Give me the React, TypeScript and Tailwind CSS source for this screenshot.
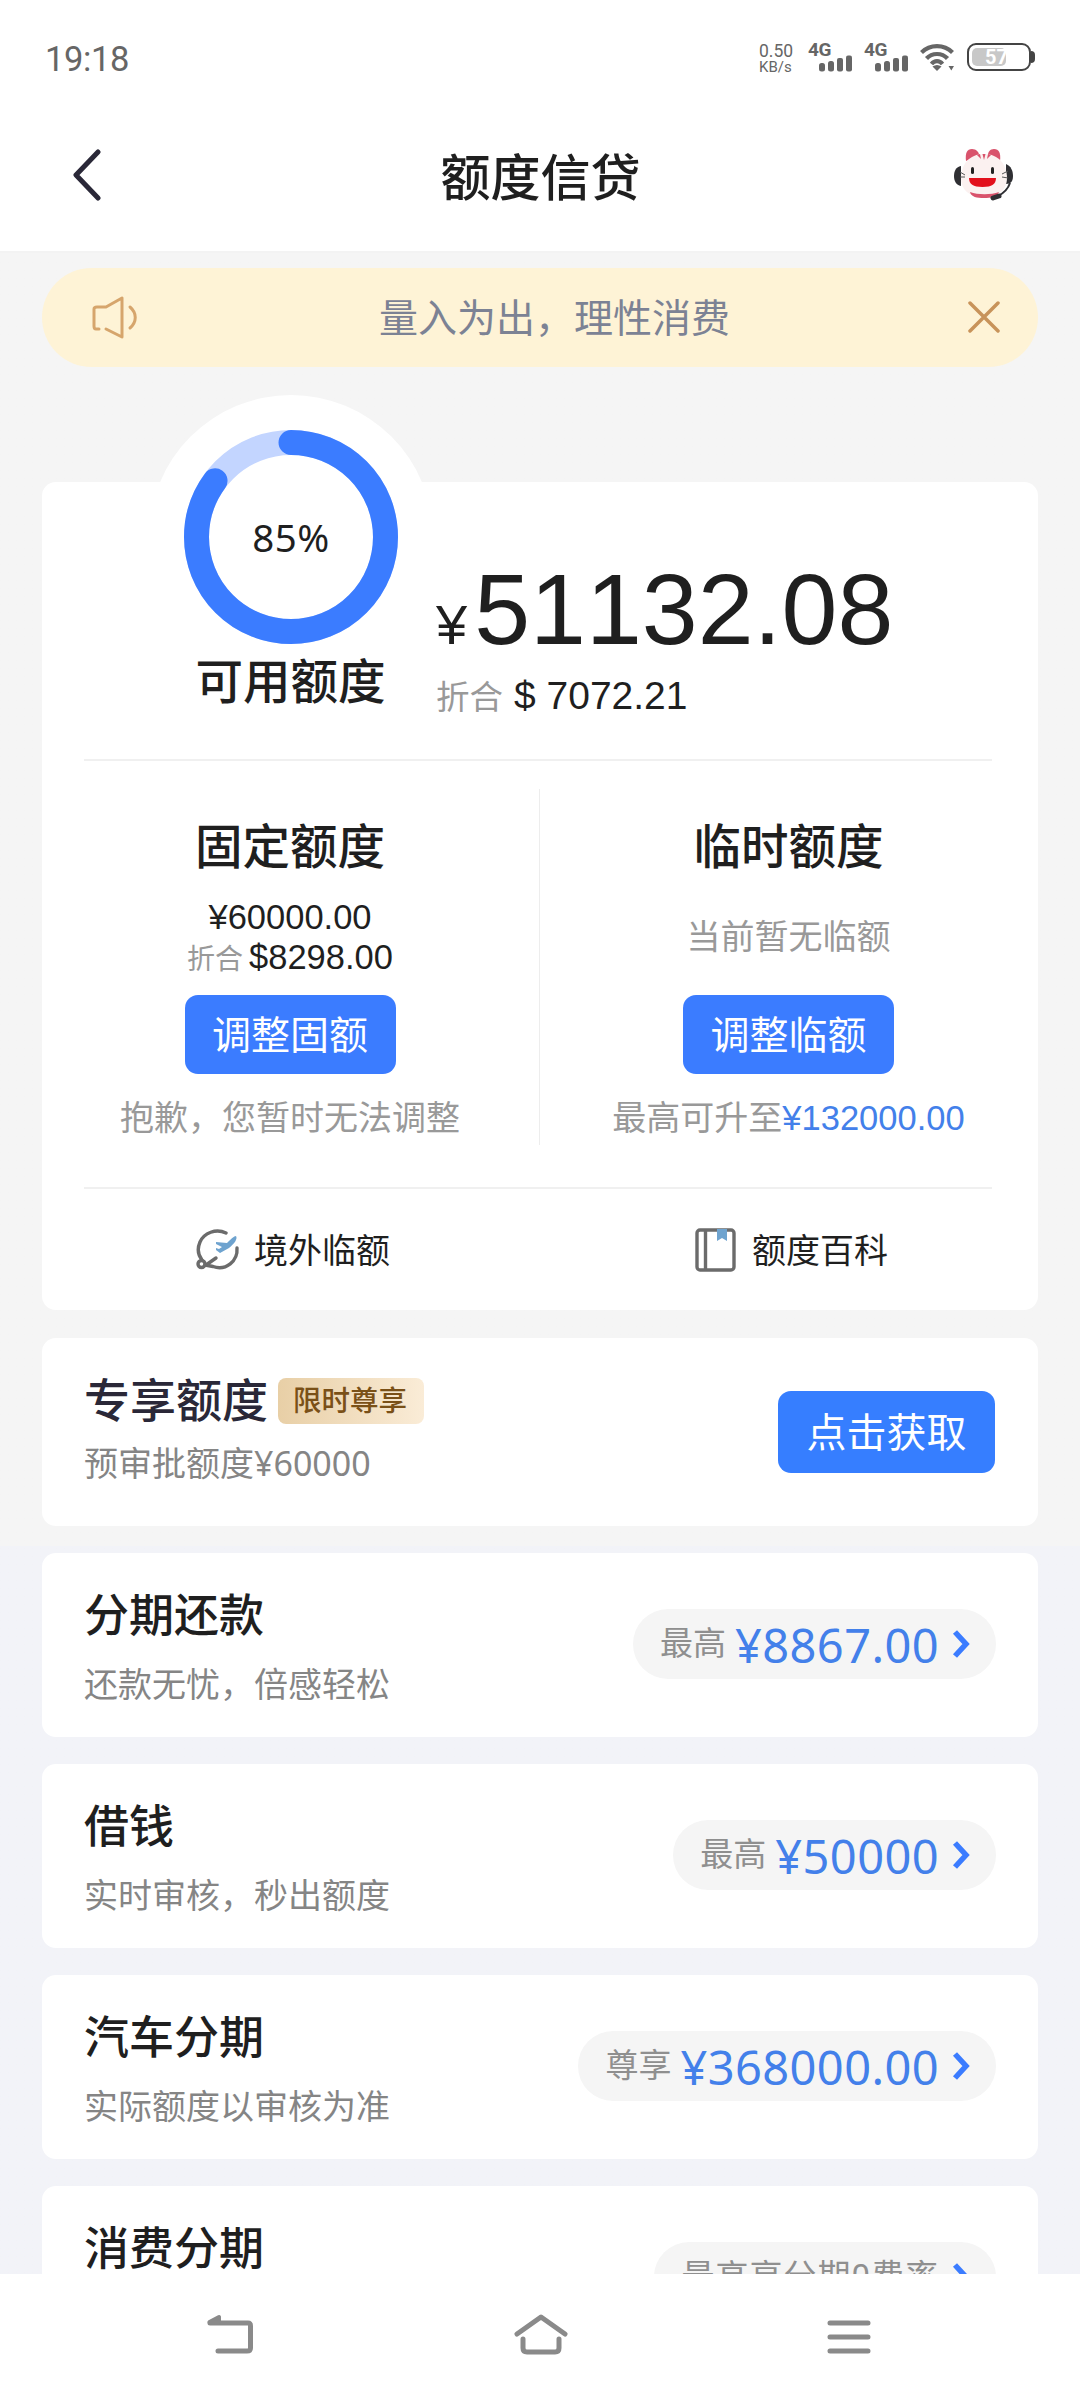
import type { ReactNode } from 'react';

// 分期产品列表
const products = [
  { title: '分期还款', desc: '还款无忧，倍感轻松', label: '最高', amount: '¥8867.00' },
  { title: '借钱', desc: '实时审核，秒出额度', label: '最高', amount: '¥50000' },
  { title: '汽车分期', desc: '实际额度以审核为准', label: '尊享', amount: '¥368000.00' },
  { title: '消费分期', desc: '', label: '最高享分期0费率', amount: '' },
];

function Signal() {
  return (
    <div className="relative w-[46px] h-[30px]">
      <span className="absolute left-0 top-0 text-[19px] leading-[16px] font-bold tracking-tight">4G</span>
      <svg className="absolute left-[11px] top-[13px]" width="34" height="17" viewBox="0 0 34 17" fill="#666">
        <rect x="0" y="8" width="6" height="8.5" rx="2.5" />
        <rect x="9" y="6" width="6" height="10.5" rx="2.5" />
        <rect x="18" y="3" width="6" height="13.5" rx="2" />
        <rect x="27" y="0.5" width="6" height="16" rx="2" />
      </svg>
    </div>
  );
}

function StatusBar() {
  return (
    <div className="h-[100px] pt-[42px] pl-[45px] pr-[45px] flex justify-between items-start text-[#666]">
      <div className="text-[34.5px] leading-[34px] tracking-[-0.4px]">19:18</div>
      <div className="flex items-start">
        <div className="w-[49px] text-[17.5px] leading-[18px]">
          <div>0.50</div>
          <div className="text-[15px] leading-[14px]">KB/s</div>
        </div>
        <div className="flex gap-[10px]">
          <Signal />
          <Signal />
        </div>
        <svg className="ml-[10px] mt-[1px]" width="36" height="30" viewBox="0 0 36 30" fill="none" stroke="#666" strokeWidth="4.2">
          <path d="M1.5 9.5C10 1 24 1 32.5 9.5" />
          <path d="M6.5 15.5C12 9.5 22 9.5 27.5 15.5" />
          <path d="M11.5 21C14.5 17.2 19.5 17.2 22.5 21" />
          <path d="M12.5 23.5C15.5 21.5 18.5 21.5 21.5 23.5L17 28Z" fill="#666" stroke="none" />
          <path d="M28.5 23h5.5l-2.7 4.5z" fill="#666" stroke="none" />
        </svg>
        <div className="ml-[11px] mt-[1px] flex items-center">
          <div className="relative w-[64px] h-[28px] border-2 border-[#444] rounded-[9px]">
            <div className="absolute left-[3px] top-[3px] w-[34px] h-[18px] rounded-[5px] bg-[#c8c8c8]" />
            <div className="absolute left-[16px] top-[2px] text-[20px] leading-[20px] font-bold text-white">57</div>
          </div>
          <div className="w-[4px] h-[12px] bg-[#444] rounded-r-full" />
        </div>
      </div>
    </div>
  );
}

function Mascot() {
  return (
    <svg width="62" height="58" viewBox="0 0 62 58">
      <path d="M13 14C12 6 14 2 19 2C23 2 26 5 26 8Z" fill="#d9536c" />
      <path d="M47 14C48 6 46 2 41 2C37 2 35 5 35 8Z" fill="#d9536c" />
      <path d="M8 19C3 20 1 24 1 29C1 34 3 38 8 39Z" fill="#2f2f33" />
      <path d="M53 17C58 19 60 24 60 29C60 34 58 37 53 37Z" fill="#2f2f33" />
      <path d="M31 7C46 7 54 18 54 31C54 43 45 50 31 50C16 50 8 43 8 31C8 18 16 7 31 7Z" fill="#fbf1f0" />
      <path d="M17 45C25 48 38 48 46 45C44 50 38 51 31 51C24 51 18 50 17 45Z" fill="#d9536c" />
      <path d="M29.5 7h3l-1.5 6zM24 8l3-1 1 5zM38 8l-3-1-1 5z" fill="#d9536c" />
      <rect x="18" y="20" width="3" height="7" rx="1.5" fill="#222" />
      <rect x="38" y="20" width="3" height="7" rx="1.5" fill="#222" />
      <path d="M16 31H43C43 37 39 40 29.5 40C20 40 16 37 16 31Z" fill="#e2101c" />
      <path d="M7 25l5 3M7 30h5M55 24l-6 3M55 31l-6-1" stroke="#555" strokeWidth="1" />
      <path d="M57 36C55 42 51 46 45 49" stroke="#2f2f33" strokeWidth="2" fill="none" />
      <path d="M46 49L40 51" stroke="#2f2f33" strokeWidth="5" strokeLinecap="round" />
    </svg>
  );
}

function Header() {
  return (
    <div className="h-[153px] pl-[70px] pr-[65px] flex items-center justify-between border-b-2 border-[#f3f3f3]">
      <svg width="34" height="54" viewBox="0 0 34 54" fill="none" stroke="#2a2838" strokeWidth="5" strokeLinecap="round" strokeLinejoin="round">
        <path d="M28 3L6 26L28 49" />
      </svg>
      <h1 className="pt-[6px] pl-[24px] text-[50px] leading-[60px] font-medium text-[#1f1f1f]">额度信贷</h1>
      <Mascot />
    </div>
  );
}

function Notice() {
  return (
    <div className="mt-[15px] h-[99px] pl-[50px] pr-[36px] rounded-full bg-[#fef3d6] flex items-center justify-between">
      <svg width="48" height="46" viewBox="0 0 48 46" fill="none" stroke="#d6a56c" strokeWidth="3" strokeLinecap="round" strokeLinejoin="round">
        <path d="M7 34H4Q2 34 2 31V14Q2 12 5 12H14L30 3V42L14 34" />
        <path d="M38 12C45 18 45 27 38 33" />
      </svg>
      <span className="pt-[3px] pl-[3px] text-[39px] leading-[48px] text-[#7c8294]">量入为出，理性消费</span>
      <svg width="36" height="34" viewBox="0 0 36 34" stroke="#c8935a" strokeWidth="3.5" strokeLinecap="round">
        <path d="M4 2L32 30M32 2L4 30" />
      </svg>
    </div>
  );
}

function ProgressRing({ percent }: { percent: number }) {
  const length = 2 * Math.PI * 94.5;
  return (
    <div className="absolute left-[107px] top-[-87px] w-[284px] h-[284px] rounded-full bg-white flex items-center justify-center">
      <svg className="absolute left-0 top-0" width="284" height="284" viewBox="0 0 284 284" fill="none" strokeWidth="25">
        <circle cx="142" cy="142" r="94.5" stroke="#c3d5ff" />
        <circle
          cx="142"
          cy="142"
          r="94.5"
          stroke="#3b7cff"
          strokeLinecap="round"
          strokeDasharray={`${(length * percent) / 100} ${length}`}
          transform="rotate(-90 142 142)"
        />
      </svg>
      <span className="relative text-[38.5px] leading-[40px] tracking-[0.5px] font-['Noto_Sans',sans-serif] text-[#1f1f1f]">{percent}%</span>
    </div>
  );
}

function BlueButton({ children }: { children: ReactNode }) {
  return (
    <button className="w-[211px] h-[79px] pt-[2px] rounded-[13px] bg-[#3b7cff] text-[39px] leading-[48px] text-white">
      {children}
    </button>
  );
}

function QuotaCard() {
  return (
    <div className="relative mt-[115px] h-[828px] px-[42px] rounded-[14px] bg-white text-[#1f1f1f]">
      <ProgressRing percent={85} />

      {/* 可用额度 */}
      <div className="relative h-[279px] mr-[4px] border-b-2 border-[#f0f0f0] flex">
        <div className="w-[352px] pl-[61px] pt-[172px] flex justify-center">
          <span className="text-[47.5px] leading-[58px] font-medium">可用额度</span>
        </div>
        <div className="pt-[77px]">
          <div className="flex items-baseline font-['Liberation_Sans',sans-serif] leading-[100px] [font-kerning:none]">
            <span className="text-[56px]">¥</span>
            <span className="ml-[7px] text-[100.5px]">51132.08</span>
          </div>
          <div className="mt-[-4px] flex items-baseline leading-[50px]">
            <span className="text-[33.5px] text-[#999]">折合</span>
            <span className="ml-[11px] text-[39px] font-['Liberation_Sans',sans-serif]">$ 7072.21</span>
          </div>
        </div>
      </div>

      <div className="h-[428px] mr-[4px] py-[28px] border-b-2 border-[#f0f0f0] flex">
        {/* 固定额度 */}
        <div className="w-[455px] pr-[43px] pt-[30px] flex flex-col items-center">
          <h2 className="text-[47.5px] leading-[58px] font-medium">固定额度</h2>
          <div className="mt-[20px] text-[34.5px] leading-[40px] font-['Liberation_Sans',sans-serif]">¥60000.00</div>
          <div className="flex items-baseline leading-[40px]">
            <span className="text-[28px] text-[#999]">折合</span>
            <span className="ml-[6px] text-[34.5px] font-['Liberation_Sans',sans-serif]">$8298.00</span>
          </div>
          <div className="mt-[15px]"><BlueButton>调整固额</BlueButton></div>
          <p className="mt-[20px] text-[34px] leading-[48px] text-[#999] whitespace-nowrap">抱歉，您暂时无法调整</p>
        </div>
        <div className="w-px h-[356px] bg-[#ededed] shrink-0" />
        {/* 临时额度 */}
        <div className="flex-1 pl-[45px] pt-[30px] flex flex-col items-center">
          <h2 className="text-[47.5px] leading-[58px] font-medium">临时额度</h2>
          <p className="mt-[36px] text-[34px] leading-[48px] text-[#999]">当前暂无临额</p>
          <div className="mt-[34px]"><BlueButton>调整临额</BlueButton></div>
          <p className="mt-[20px] text-[34px] leading-[48px] text-[#999] whitespace-nowrap">
            最高可升至<span className="text-[34.5px] text-[#4380ea] font-['Liberation_Sans',sans-serif]">¥132000.00</span>
          </p>
        </div>
      </div>

      <div className="h-[121px] flex items-center text-[34px] leading-[48px]">
        <div className="w-[499px] pl-[112px] flex items-center">
          <svg width="44" height="44" viewBox="0 0 44 44" fill="none" stroke="#6b6b6b" strokeWidth="3.4" strokeLinecap="round">
            <path d="M30 5C20 0 8 5 4 14C1 21 2 27 6 32" />
            <path d="M41 20C42 33 30 43 17 38.5L9 37" />
            <path d="M20 30L10 37" />
            <circle cx="5.5" cy="36" r="3.5" />
            <path d="M40 8C38 8 35 11 31 15L20 14V16L26 19L23 21L20 20V22L24 25L33 20C38 16 42 11 40 8Z" fill="#6ea3cf" stroke="none" />
          </svg>
          <span className="ml-[14px] pt-[2px]">境外临额</span>
        </div>
        <div className="pl-[112px] flex items-center">
          <svg width="42" height="44" viewBox="0 0 42 44" fill="none" stroke="#6b6b6b" strokeWidth="3.4">
            <rect x="2" y="2" width="37" height="40" rx="3" />
            <path d="M10.5 2V42" />
            <path d="M22 1H32V13L27 10L22 13Z" fill="#6ea3cf" stroke="none" />
          </svg>
          <span className="ml-[15px] pt-[2px]">额度百科</span>
        </div>
      </div>
    </div>
  );
}

function ExclusiveCard() {
  return (
    <div className="mt-[28px] h-[188px] pl-[42px] pr-[43px] rounded-[14px] bg-white flex items-center justify-between">
      <div className="pb-[6px]">
        <div className="flex items-center">
          <h2 className="text-[46px] leading-[58px] font-medium text-[#2a2838]">专享额度</h2>
          <span className="ml-[10px] w-[146px] h-[46px] pr-[2px] rounded-[8px] bg-linear-to-r from-[#e8cfa6] to-[#faecd7] text-center text-[28.5px] leading-[47px] font-medium text-[#7a5017]">
            限时尊享
          </span>
        </div>
        <p className="mt-[9px] text-[34px] leading-[48px] font-['Noto_Sans','Noto_Sans_CJK_SC',sans-serif] text-[#858585]">预审批额度¥60000</p>
      </div>
      <button className="w-[217px] h-[82px] pt-[3px] rounded-[13px] bg-[#367eff] text-[40px] leading-[48px] text-white">点击获取</button>
    </div>
  );
}

function ProductCard({ title, desc, label, amount }: (typeof products)[number]) {
  return (
    <div className="h-[184px] shrink-0 pl-[42px] pr-[42px] rounded-[14px] bg-white flex justify-between">
      <div className="pt-[35px]">
        <h3 className="text-[45px] leading-[58px] font-medium text-[#1f1f1f]">{title}</h3>
        <p className="mt-[15px] text-[34px] leading-[48px] text-[#858585]">{desc}</p>
      </div>
      <div className="mt-[56px] h-[70px] pl-[27px] pr-[24px] rounded-full bg-[#f5f5f5] flex items-center">
        {amount ? (
          <>
            <span className="text-[33px] leading-[40px] text-[#8f8f8f]">{label}</span>
            <span className="ml-[9px] pt-[2px] text-[47px] leading-[56px] tracking-[0.4px] font-['Noto_Sans',sans-serif] text-[#4380ea]">{amount}</span>
          </>
        ) : (
          <span className="text-[33px] leading-[40px] tracking-[1px] text-[#8f8f8f]">{label}</span>
        )}
        <svg className="ml-[13px]" width="20" height="30" viewBox="0 0 20 30" fill="none" stroke="#3b7cff" strokeWidth="5.5">
          <path d="M3 3L14 15L3 27" />
        </svg>
      </div>
    </div>
  );
}

function NavBar() {
  return (
    <div className="h-[126px] pl-[205px] pr-[209px] pb-[4px] bg-white flex items-center justify-between">
      <svg width="50" height="42" viewBox="0 0 50 42" fill="none" stroke="#8a8a8a" strokeWidth="5" strokeLinecap="round" strokeLinejoin="round">
        <path d="M5 9H43Q45.5 9 45.5 12V34Q45.5 37 42 37H13" />
        <path d="M4.5 8L14 3V8Z" fill="#8a8a8a" strokeWidth="4" />
      </svg>
      <svg width="56" height="42" viewBox="0 0 56 42" fill="none" stroke="#8a8a8a" strokeWidth="5" strokeLinecap="round" strokeLinejoin="round">
        <path d="M4 20L28 3L52 20" />
        <path d="M10 25V34Q10 38 14 38H42Q46 38 46 34V25" />
      </svg>
      <svg width="44" height="42" viewBox="0 0 44 42" stroke="#8a8a8a" strokeWidth="5" strokeLinecap="round">
        <path d="M3 9H41M3 23H41M3 37H41" />
      </svg>
    </div>
  );
}

export default function App() {
  return (
    <div className="w-[1080px] h-[2400px] overflow-hidden flex flex-col bg-white font-[Roboto,'Noto_Sans_CJK_SC',sans-serif]">
      <StatusBar />
      <Header />
      <main className="flex-1 min-h-0 overflow-hidden px-[42px] bg-linear-to-b from-[#f5f5f5] from-64% to-[#f2f3f8] to-64%">
        <Notice />
        <QuotaCard />
        <ExclusiveCard />
        <div className="mt-[27px] flex flex-col gap-[27px]">
          {products.map((p) => (
            <ProductCard key={p.title} {...p} />
          ))}
        </div>
      </main>
      <NavBar />
    </div>
  );
}
